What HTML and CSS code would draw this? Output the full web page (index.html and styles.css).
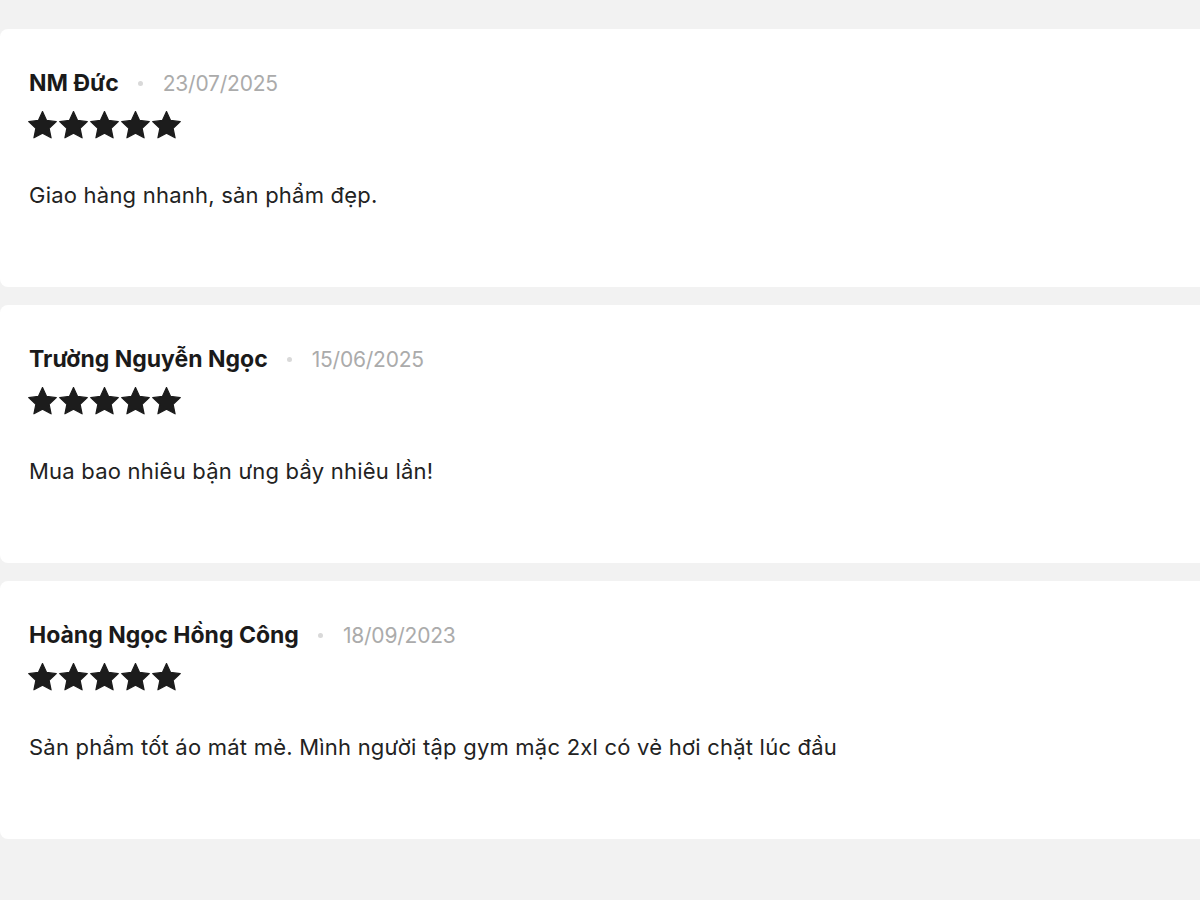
FILE: index.html
```html
<!DOCTYPE html>
<html>
<head>
    <meta charset="utf-8">
    <title>Đánh giá sản phẩm</title>
    <link rel="stylesheet" href="styles.css">
</head>
<body>
    <div class="reviews">
        <div class="review">
            <div class="review-head">
                <span class="review-name">NM Đức</span>
                <span class="review-dot"></span>
                <span class="review-date">23/07/2025</span>
            </div>
            <div class="stars">
                <svg class="star" viewBox="0 0 24 24"><path d="M12 .5L15.4 7.8 23.4 8.8 17.5 14.3 19.1 22.2 12 18.3 4.9 22.2 6.5 14.3.6 8.8 8.6 7.8z"/></svg>
                <svg class="star" viewBox="0 0 24 24"><path d="M12 .5L15.4 7.8 23.4 8.8 17.5 14.3 19.1 22.2 12 18.3 4.9 22.2 6.5 14.3.6 8.8 8.6 7.8z"/></svg>
                <svg class="star" viewBox="0 0 24 24"><path d="M12 .5L15.4 7.8 23.4 8.8 17.5 14.3 19.1 22.2 12 18.3 4.9 22.2 6.5 14.3.6 8.8 8.6 7.8z"/></svg>
                <svg class="star" viewBox="0 0 24 24"><path d="M12 .5L15.4 7.8 23.4 8.8 17.5 14.3 19.1 22.2 12 18.3 4.9 22.2 6.5 14.3.6 8.8 8.6 7.8z"/></svg>
                <svg class="star" viewBox="0 0 24 24"><path d="M12 .5L15.4 7.8 23.4 8.8 17.5 14.3 19.1 22.2 12 18.3 4.9 22.2 6.5 14.3.6 8.8 8.6 7.8z"/></svg>
            </div>
            <p class="review-text">Giao hàng nhanh, sản phẩm đẹp.</p>
        </div>

        <div class="review">
            <div class="review-head">
                <span class="review-name">Trường Nguyễn Ngọc</span>
                <span class="review-dot"></span>
                <span class="review-date">15/06/2025</span>
            </div>
            <div class="stars">
                <svg class="star" viewBox="0 0 24 24"><path d="M12 .5L15.4 7.8 23.4 8.8 17.5 14.3 19.1 22.2 12 18.3 4.9 22.2 6.5 14.3.6 8.8 8.6 7.8z"/></svg>
                <svg class="star" viewBox="0 0 24 24"><path d="M12 .5L15.4 7.8 23.4 8.8 17.5 14.3 19.1 22.2 12 18.3 4.9 22.2 6.5 14.3.6 8.8 8.6 7.8z"/></svg>
                <svg class="star" viewBox="0 0 24 24"><path d="M12 .5L15.4 7.8 23.4 8.8 17.5 14.3 19.1 22.2 12 18.3 4.9 22.2 6.5 14.3.6 8.8 8.6 7.8z"/></svg>
                <svg class="star" viewBox="0 0 24 24"><path d="M12 .5L15.4 7.8 23.4 8.8 17.5 14.3 19.1 22.2 12 18.3 4.9 22.2 6.5 14.3.6 8.8 8.6 7.8z"/></svg>
                <svg class="star" viewBox="0 0 24 24"><path d="M12 .5L15.4 7.8 23.4 8.8 17.5 14.3 19.1 22.2 12 18.3 4.9 22.2 6.5 14.3.6 8.8 8.6 7.8z"/></svg>
            </div>
            <p class="review-text">Mua bao nhiêu bận ưng bầy nhiêu lần!</p>
        </div>

        <div class="review">
            <div class="review-head">
                <span class="review-name">Hoàng Ngọc Hồng Công</span>
                <span class="review-dot"></span>
                <span class="review-date">18/09/2023</span>
            </div>
            <div class="stars">
                <svg class="star" viewBox="0 0 24 24"><path d="M12 .5L15.4 7.8 23.4 8.8 17.5 14.3 19.1 22.2 12 18.3 4.9 22.2 6.5 14.3.6 8.8 8.6 7.8z"/></svg>
                <svg class="star" viewBox="0 0 24 24"><path d="M12 .5L15.4 7.8 23.4 8.8 17.5 14.3 19.1 22.2 12 18.3 4.9 22.2 6.5 14.3.6 8.8 8.6 7.8z"/></svg>
                <svg class="star" viewBox="0 0 24 24"><path d="M12 .5L15.4 7.8 23.4 8.8 17.5 14.3 19.1 22.2 12 18.3 4.9 22.2 6.5 14.3.6 8.8 8.6 7.8z"/></svg>
                <svg class="star" viewBox="0 0 24 24"><path d="M12 .5L15.4 7.8 23.4 8.8 17.5 14.3 19.1 22.2 12 18.3 4.9 22.2 6.5 14.3.6 8.8 8.6 7.8z"/></svg>
                <svg class="star" viewBox="0 0 24 24"><path d="M12 .5L15.4 7.8 23.4 8.8 17.5 14.3 19.1 22.2 12 18.3 4.9 22.2 6.5 14.3.6 8.8 8.6 7.8z"/></svg>
            </div>
            <p class="review-text">Sản phẩm tốt áo mát mẻ. Mình người tập gym mặc 2xl có vẻ hơi chặt lúc đầu</p>
        </div>
    </div>
</body>
</html>
```

FILE: styles.css
```css
body {
    margin: 0;
    background-color: #f2f2f2;
    font-family: Inter, "Noto Sans", sans-serif;
    color: #222;
    overflow: hidden;
}
.reviews {
    display: flex;
    flex-direction: column;
    gap: 18px;
    padding-top: 29px;
    margin-right: -20px;
}
.review {
    height: 258px;
    box-sizing: border-box;
    padding: 39px 28px 0 29px;
    background-color: #fff;
    border-radius: 8px;
}
.review-head {
    display: flex;
    align-items: center;
    height: 30px;
}
.review-name {
    font-size: 23px;
    font-weight: 700;
    letter-spacing: 0;
    color: #1a1a1a;
}
.review-dot {
    width: 5px;
    height: 5px;
    margin: 0 20px 0 19px;
    border-radius: 50%;
    background-color: #d9d9d9;
}
.review-date {
    font-size: 21px;
    letter-spacing: -0.01em;
    color: #ababab;
}
.stars {
    display: flex;
    gap: 2px;
    margin: 13px 0 0 -1px;
}
.star {
    width: 29px;
    height: 29px;
    fill: #1c1c1c;
    stroke: #1c1c1c;
    stroke-width: 1;
    stroke-linejoin: round;
}
.review-text {
    margin: 42px 0 0;
    font-size: 22px;
    letter-spacing: 0.01em;
    color: #222;
}
```
